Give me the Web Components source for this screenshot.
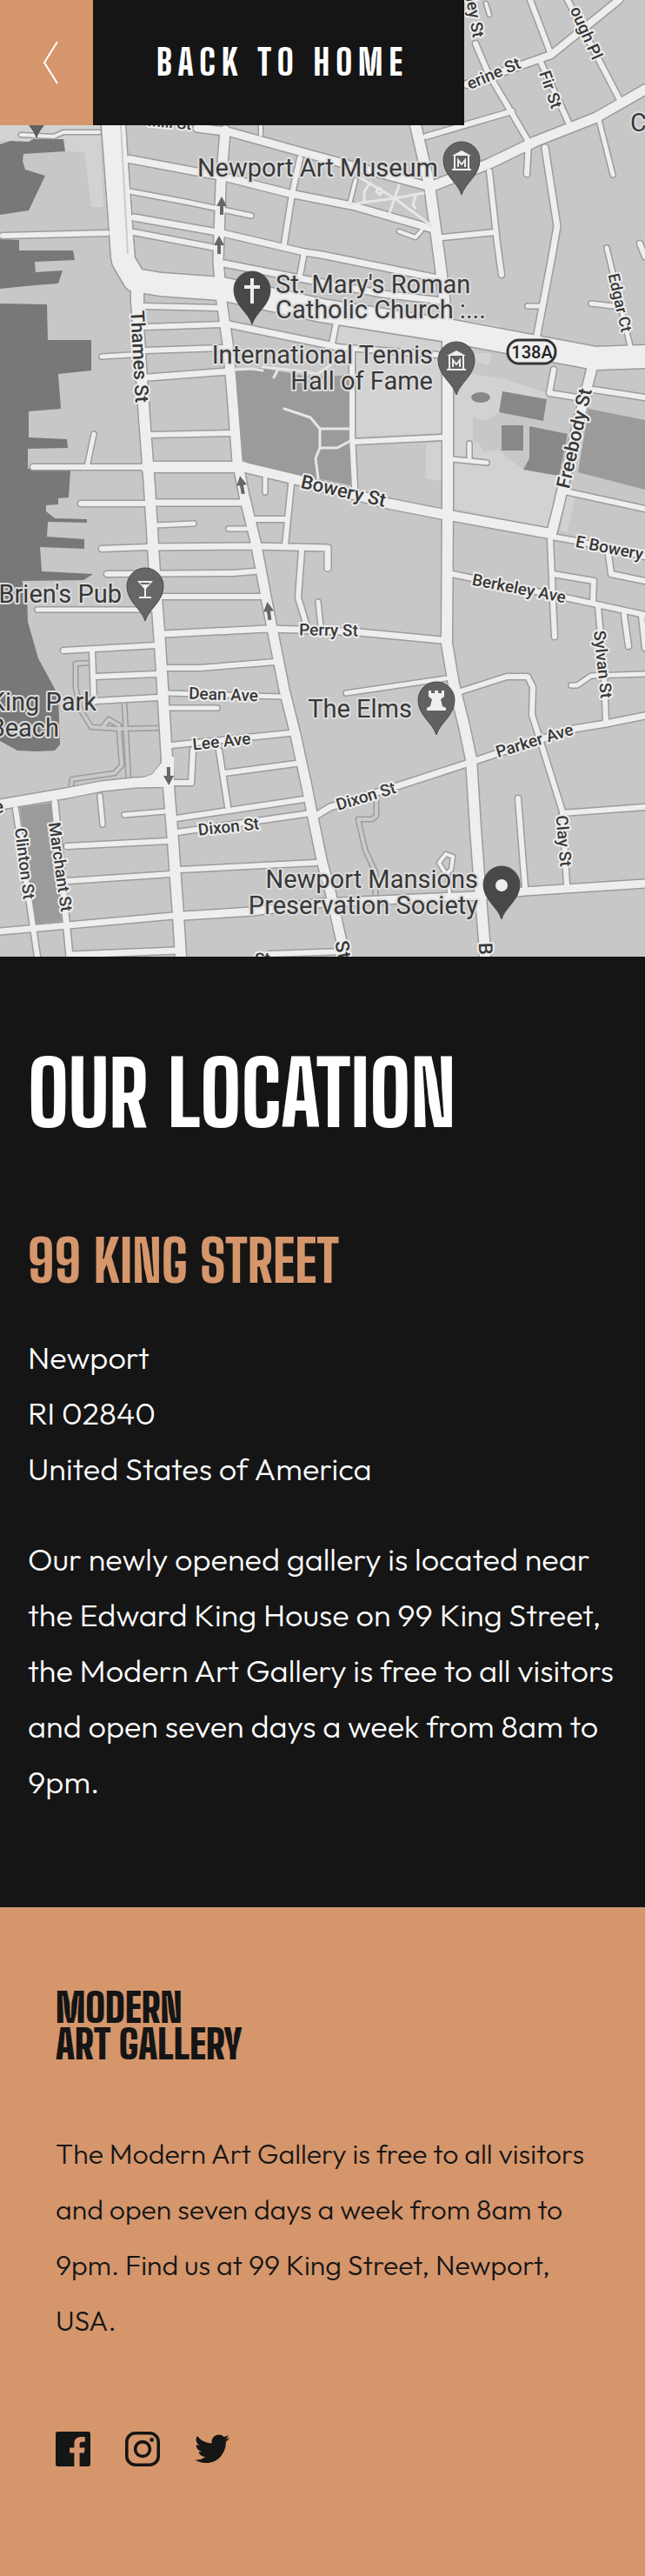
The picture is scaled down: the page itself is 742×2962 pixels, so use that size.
<!DOCTYPE html>
<html lang="en">
<head>
<meta charset="utf-8">
<meta name="viewport" content="width=device-width, initial-scale=1">
<title>Modern Art Gallery – Our Location</title>
<style>
  :root {
    --ink: #151515;
    --clay: #d5966c;
    --display: "Big Shoulders Display", Oswald, "Roboto Condensed", "Open Sans Condensed", sans-serif;
    --text: Outfit, Lato, "Open Sans", sans-serif;
  }
  body { margin: 0; background: var(--clay); font-family: var(--text); font-weight: 300; }
  main { display: block; position: relative; }
</style>
</head>
<body>
<main>
  <back-link href="#home">Back to home</back-link>
  <location-map></location-map>
  <location-details>
    <span slot="title">Our location</span>
    <span slot="street">99 King Street</span>
    <span slot="address">Newport<br>RI 02840<br>United States of America</span>
    <span slot="about">Our newly opened gallery is located near the Edward King House on 99 King Street, the Modern Art Gallery is free to all visitors and open seven days a week from 8am to 9pm.</span>
  </location-details>
</main>
<site-footer>
  <span slot="brand">Modern<br>Art Gallery</span>
  <span slot="about">The Modern Art Gallery is free to all visitors and open seven days a week from 8am to 9pm. Find us at 99 King Street, Newport, USA.</span>
  <social-link slot="social" network="facebook"></social-link>
  <social-link slot="social" network="instagram"></social-link>
  <social-link slot="social" network="twitter"></social-link>
</site-footer>

<script>
class BackLink extends HTMLElement {
  connectedCallback() {
    this.attachShadow({ mode: 'open' }).innerHTML = `
      <style>
        :host { position: absolute; top: 0; left: 0; z-index: 1; }
        a { display: flex; height: 144px; color: #fff; text-decoration: none; background: var(--ink); }
        .arrow { background: var(--clay); width: 107px; height: 144px; }
        .label { display: flex; align-items: center; padding: 0 64px 0 73px;
          font: 800 41px/48px var(--display); letter-spacing: 7px; text-transform: uppercase; }
      </style>
      <a href="${this.getAttribute('href')}">
        <svg class="arrow" viewBox="0 0 107 144" aria-hidden="true"><path d="M66 48L51 72L66 96" fill="none" stroke="#fff" stroke-width="2"/></svg>
        <span class="label"><slot></slot></span>
      </a>`;
  }
}
customElements.define('back-link', BackLink);

/* Street map: areas, roads, labels and pins on a 742 x 1100 canvas. */
const WATER = [
  '0,166 12,162 33,163 38,160 73,160 75,174 27,177 26,185 29,195 52,202 33,242 0,247',
  '0,275 22,276 22,288 84,288 86,299 40,301 41,313 72,311 67,326 40,328 0,332',
  '0,349 54,350 55,391 105,391 105,426 67,430 70,470 33,473 33,503 77,505 78,515 32,516 32,539 81,541 79,572 67,573 67,580 53,581 53,588 63,596 100,597 100,601 55,600 54,617 97,620 97,631 46,629 48,657 107,660 96,667 25,668 31,683 32,715 44,757 63,792 67,800 69,856 63,863 42,864 20,863 0,852',
];
const PALE = [
  '0,144 115,144 119,238 105,238 97,175 75,174 73,160 38,160 33,163 0,162',
  '410,403 508,403 508,498 410,502', '490,510 508,508 508,553 490,550',
  '523,427 577,435 630,452 625,484 574,474 560,484 544,480 544,507 553,512 555,520 573,517 602,540 643,547 630,606 523,585',
  '388,374 508,391 508,410 386,396', '652,566 661,574 652,612 645,610',
  '520,366 575,374 575,382 520,372', '540,406 565,406 563,420 540,414',
];
const PARK = [
  '268,425 300,423 350,432 403,432 403,558 365,550 280,532',
  '677,470 742,483 742,563 665,543', '23,928 60,923 73,1059 39,1063',
];
const COURTS = ['578,450 629,459 625,484 574,474', '577,489 602,489 602,518 577,518', '609,490 653,499 643,547 602,540 609,527'];
const ROADS = {
  26: ['130,144 142,300 155,322 185,327 255,332 370,357 515,380 685,412 742,410', '131,144 141,295'],
  14: ['158,330 158,348'],
  12: ['157,345 166,480 172,560 178,660 184,740 190,840 194,905 199,967 205,1053 208,1100',
       '478,144 494,213 506,300 511,343 515,390 515,580 514,740 522,787 534,835 542,873 547,953 552,1020 557,1080 558,1100',
       '168,537 280,537'],
  11: ['259,150 254,213 251,300 255,347 262,395 266,440 273,530 281,570 294,623 310,707 327,793 340,845 352,900 361,945 371,993 380,1025 393,1083 397,1100',
       '280,537 343,552 447,579 508,591 630,613', '495,215 563,188 615,163 686,135 742,103',
       '0,925 77,912 117,904 155,900 190,899', '681,423 660,507 643,580 635,612'],
  9: ['211,1053 290,1048 370,1038 550,1030 603,1025 742,1016', '227,147 265,152 355,177 495,215'],
  8: ['149,183 256,203 331,222 407,237 497,263', '712,0 634,63 537,97'],
  7: ['154,250 256,268 350,290 370,293 503,320', '627,170 641,260 634,300 617,390', '360,940 380,928 460,903 540,877 570,867 660,838 697,832 742,823',
      '63,923 80,1100', '0,1071 200,1053', '82,1098 202,1093', '189,729 307,723 345,724 413,727 508,736', '258,303 345,320 440,338 508,346',
      '263,373 380,397 387,399', '178,578 277,578', '170,629 290,628 377,630 377,653', '170,434 263,427'],
  6: ['154,267 248,285', '3,271 123,268', '345,182 336,223 327,280', '610,0 634,63', '547,50 562,85 587,127 608,163 606,200',
      '490,157 589,128', '653,0 712,113', '620,67 655,143', '563,197 572,280 577,316', '509,273 570,267', '350,290 345,317', '736,280 742,295',
      '165,352 252,354', '167,376 257,373', '387,370 382,395', '167,403 257,400', '173,500 267,498', '405,403 405,500 408,560',
      '408,508 508,503', '637,425 632,452 670,458', '683,448 742,457', '633,620 636,690 638,732', '650,565 742,585',
      '520,660 650,687 742,707', '636,660 683,668 682,693', '700,637 703,660 742,668', '635,617 663,622 742,640',
      '688,697 695,777 697,830', '718,707 723,743', '738,708 742,745', '530,795 583,778 607,778 613,790 612,822 620,847 647,933 652,1017',
      '647,935 742,928', '596,918 604,1020', '93,579 167,579', '117,631 170,629', '290,597 327,597', '335,557 328,627', '347,633 343,687 352,717',
      '123,660 267,659 293,657', '187,686 300,686', '73,748 180,742', '106,747 108,807', '110,778 180,775', '110,806 182,802',
      '193,768 230,768 317,761', '197,857 333,843', '222,862 220,900 200,900', '252,863 262,927', '258,889 340,878', '203,941 350,919',
      '204,957 358,935', '77,973 193,967', '207,1000 363,992', '78,1013 197,1005', '18,930 43,1100', '38,537 163,537', '310,1097 395,1094', '387,399 503,408'],
  5: ['149,220 213,232 289,248', '689,138 705,201', '698,285 725,398', '607,352 620,352', '680,349 705,352', '117,410 150,408', '108,499 100,537',
      '520,528 560,532', '540,510 540,529', '178,604 223,602', '263,608 283,608', '305,550 305,566', '366,692 369,720', '43,701 173,701',
      '193,797 323,801', '195,814 250,814', '143,937 190,933', '115,915 118,948', '657,788 664,788 680,777 742,775', '398,797 513,780'],
  4: ['24,155 62,157 73,152 114,152', '409,207 402,235', '300,144 300,155', '459,266 478,273 485,265', '559,4 563,17',
      '513,982 521,985 519,1000 513,1005 505,992 513,982', '515,1005 517,1027'],
};
const PATHS = ['412,203 454,228 497,260', '487,222 454,228 402,235', '459,213 447,248', '419,233 419,220 426,210', '436,216 440,220 437,224 433,220 436,216',
  '478,225 475,236 478,239', '327,470 357,480 368,493 368,515 363,527 366,550', '270,425 290,424 302,426', '302,422 340,426 365,430 380,420', '320,424 315,434', '368,493 403,493',
  '368,515 388,515 403,507'];
const TRACKS = ['105,762 87,763 87,790 92,815 105,836 138,838 185,837', '137,840 140,880 132,889 83,896 82,903', '143,808 148,897',
  '119,835 125,827 137,834', '433,920 433,938 428,942 412,942 420,977 432,1003 432,1030'];
const STREETS = [
  [160, 410, 87, 22, 'Thames St'], [395, 565, 13, 22, 'Bowery St'], [661, 504, -77, 22, 'Freebody St'], [709, 632, 11, 19, 'E Bowery S'],
  [597, 677, 11, 19, 'Berkeley Ave'], [378, 725, 1, 19, 'Perry St'], [693, 764, 84, 19, 'Sylvan St'], [257, 799, 2, 19, 'Dean Ave'],
  [255, 853, -6, 19, 'Lee Ave'], [263, 951, -6, 19, 'Dixon St'], [421, 916, -17, 19, 'Dixon St'], [615, 852, -17, 19, 'Parker Ave'],
  [648, 967, 85, 19, 'Clay St'], [28, 993, 83, 19, 'Clinton St'], [69, 997, 82, 19, 'Marchant St'], [713, 348, 77, 18, 'Edgar Ct'],
  [633, 103, 71, 19, 'Fir St'], [674, 38, 66, 19, 'ough Pl'], [546, 20, 80, 19, 'ley St'], [568, 85, -23, 19, 'erine St'],
  [195, 141, 5, 18, 'Mill St'], [394, 1092, 80, 22, 'St'], [558, 1091, 88, 22, 'B'], [302, 1103, -3, 19, 'St'], [-2, 928, -8, 22, 'e'],
];
const PLACES = [
  [504, 203, 'end', 'Newport Art Museum'], [317, 337, 'start', "St. Mary's Roman"], [317, 366, 'start', 'Catholic Church :...'],
  [498, 418, 'end', 'International Tennis'], [498, 448, 'end', 'Hall of Fame'], [140, 693, 'end', "Brien's Pub"],
  [111, 817, 'end', 'King Park'], [68, 847, 'end', 'Beach'], [474, 825, 'end', 'The Elms'],
  [550, 1021, 'end', 'Newport Mansions'], [550, 1051, 'end', 'Preservation Society'], [725, 151, 'start', 'C'],
];
const MUSEUM = '<path d="M-11-45L0-51L11-45Z" fill="#eee"/><path d="M-8-45V-30M8-45V-30M-11-29H11" fill="none" stroke="#eee" stroke-width="2"/><path d="M-4-32V-40L0-35L4-40V-32" fill="none" stroke="#eee" stroke-width="2"/>';
const PINS = [
  [531, 224, '#616161', MUSEUM], [525, 454, '#616161', MUSEUM], [42, 158, '#616161', ''],
  [290, 373, '#484848', '<path d="M0-53V-24M-9-43H9" stroke="#eee" stroke-width="4"/>'],
  [167, 714, '#666', '<path d="M-9-46H9L1-37V-28H7V-26H-7V-28H-1V-37Z" fill="#eee"/><path d="M-6-44H6L4-42H-4Z" fill="#666"/>'],
  [502, 845, '#616161', '<path d="M-9-51H-6V-48H-2V-51H2V-48H6V-51H9V-44L5-41L7-33L11-31V-28H-11V-31L-7-33L-5-41L-9-44Z" fill="#eee"/>'],
  [577, 1057, '#484848', '<circle cy="-39" r="7" fill="#eee"/>'],
];
const ARROWS = [[255, 237, 0], [252, 282, 0], [278, 558, -10], [309, 703, -8], [194, 892, 179]];

class LocationMap extends HTMLElement {
  connectedCallback() {
    const areas = (list, fill) => list.map(p => `<polygon points="${p}" fill="${fill}"/>`).join('');
    const lines = (list, width, stroke) => list.map(p => `<polyline points="${p}" stroke-width="${width}" stroke="${stroke}"/>`).join('');
    const roads = (extra, stroke) => Object.entries(ROADS).map(([w, list]) => lines(list, +w + extra, stroke)).join('');
    this.attachShadow({ mode: 'open' }).innerHTML = `
      <style>
        :host { display: block; background: #c7c7c7; }
        svg { display: block; width: 100%; height: auto; font-family: Roboto, sans-serif; }
        polyline { fill: none; stroke-linecap: round; stroke-linejoin: round; }
        text { fill: #383838; stroke: #dcdcdc; stroke-width: 4; stroke-linejoin: round; paint-order: stroke; }
        .street { font-weight: 500; text-anchor: middle; stroke: #eee; }
        .place { font-size: 29px; font-weight: 400; }
        .route { font-size: 20px; font-weight: 500; text-anchor: middle; stroke: none; fill: #222; }
      </style>
      <svg viewBox="0 0 742 1100" role="img" aria-label="Map of Newport around 99 King Street">
        ${areas(PALE, '#d2d2d2')}${areas(WATER, '#787878')}${areas(PARK, '#9b9b9b')}${areas(COURTS, '#888')}
        <ellipse cx="553" cy="457" rx="11" ry="6" fill="#888"/>
        ${lines(TRACKS, 7, '#9c9c9c')}${lines(TRACKS, 4, '#cacaca')}
        ${roads(3, '#9c9c9c')}
        <path d="M186 870V877L175 890L157 897V905H200V870Z" fill="#eee"/><path d="M185 872V877L175 890L157 896" fill="none" stroke="#9c9c9c"/>
        ${roads(0, '#eee')}
        <path d="M139 144L147 292" stroke="#ccc" stroke-width="2"/>
        ${lines(PATHS, 3, '#e6e6e6')}
        ${ARROWS.map(([x, y, r]) => `<path transform="translate(${x} ${y}) rotate(${r})" d="M0-11L6 0H2V10H-2V0H-6Z" fill="#666"/>`).join('')}
        ${STREETS.map(([x, y, r, size, name]) => `<text class="street" transform="translate(${x} ${y}) rotate(${r})" y="${Math.round(size / 3)}" font-size="${size}">${name}</text>`).join('')}
        <rect x="584" y="391" width="55" height="27" rx="13" fill="#eee" stroke="#333" stroke-width="3"/>
        <text class="route" x="612" y="412">138A</text>
        ${PINS.map(([x, y, fill, glyph]) => `<g transform="translate(${x} ${y})"><path d="M0 0C-4-14-21-22-21-40A21 21 0 0 1 21-40C21-22 4-14 0 0Z" fill="${fill}" stroke="#4a4a4a"/>${glyph}</g>`).join('')}
        ${PLACES.map(([x, y, anchor, name]) => `<text class="place" x="${x}" y="${y}" text-anchor="${anchor}">${name}</text>`).join('')}
      </svg>`;
  }
}
customElements.define('location-map', LocationMap);

class LocationDetails extends HTMLElement {
  connectedCallback() {
    this.attachShadow({ mode: 'open' }).innerHTML = `
      <style>
        :host { display: block; padding: 107px 32px 112px; background: var(--ink); color: #fff; }
        h1, h2, address, p { margin: 0; font-style: normal; }
        h1, h2 { font-family: var(--display); font-weight: 800; text-transform: uppercase; }
        h1 { font-size: 102px; line-height: 100px; }
        h2 { margin-top: 108px; font-size: 66px; line-height: 70px; color: var(--clay); }
        address, p { font-size: 36px; line-height: 64px; }
        address { margin-top: 44px; }
        p { margin-top: 40px; }
      </style>
      <h1><slot name="title"></slot></h1>
      <h2><slot name="street"></slot></h2>
      <address><slot name="address"></slot></address>
      <p><slot name="about"></slot></p>`;
  }
}
customElements.define('location-details', LocationDetails);

const SOCIAL = {
  facebook: '<path d="M18.896 0H1.104C.494 0 0 .494 0 1.104v17.793C0 19.506.494 20 1.104 20h9.58v-7.745H8.076V9.237h2.606V7.01c0-2.583 1.578-3.99 3.883-3.99 1.104 0 2.052.082 2.329.119v2.7h-1.598c-1.254 0-1.496.597-1.496 1.47v1.928h2.989l-.39 3.018h-2.6V20h5.098c.608 0 1.102-.494 1.102-1.104V1.104C20 .494 19.506 0 18.896 0z"/>',
  instagram: '<rect x=".9" y=".9" width="18.2" height="18.2" rx="5" fill="none" stroke="currentColor" stroke-width="1.8"/><circle cx="10" cy="10" r="4.2" fill="none" stroke="currentColor" stroke-width="1.8"/><circle cx="15.3" cy="4.7" r="1.2"/>',
  twitter: '<path transform="translate(0 1.5)" d="M20 2.172a8.192 8.192 0 01-2.357.646 4.11 4.11 0 001.805-2.27 8.22 8.22 0 01-2.606.996A4.096 4.096 0 0013.847.248c-2.65 0-4.596 2.472-3.998 5.037A11.648 11.648 0 011.392.998a4.109 4.109 0 001.27 5.478 4.086 4.086 0 01-1.858-.513c-.045 1.9 1.318 3.679 3.291 4.075a4.113 4.113 0 01-1.853.07 4.106 4.106 0 003.833 2.849A8.25 8.25 0 010 14.658a11.616 11.616 0 006.29 1.843c7.618 0 11.922-6.434 11.662-12.205A8.354 8.354 0 0020 2.172z"/>',
};
class SocialLink extends HTMLElement {
  connectedCallback() {
    const network = this.getAttribute('network');
    this.attachShadow({ mode: 'open' }).innerHTML = `
      <style>
        :host { display: block; }
        a { display: block; color: var(--ink); }
        svg { display: block; width: 40px; height: 40px; fill: currentColor; }
      </style>
      <a href="#${network}" aria-label="${network}"><svg viewBox="0 0 20 20" aria-hidden="true">${SOCIAL[network]}</svg></a>`;
  }
}
customElements.define('social-link', SocialLink);

class SiteFooter extends HTMLElement {
  connectedCallback() {
    this.attachShadow({ mode: 'open' }).innerHTML = `
      <style>
        :host { display: block; background: var(--clay); color: var(--ink); }
        footer { padding: 95px 64px 126px; }
        .brand { font: 900 46px/42px var(--display); text-transform: uppercase; }
        p { margin: 72px 0 96px; font-size: 32px; line-height: 64px; }
        nav { display: flex; gap: 40px; }
      </style>
      <footer>
        <div class="brand"><slot name="brand"></slot></div>
        <p><slot name="about"></slot></p>
        <nav aria-label="Social media"><slot name="social"></slot></nav>
      </footer>`;
  }
}
customElements.define('site-footer', SiteFooter);
</script>
</body>
</html>
